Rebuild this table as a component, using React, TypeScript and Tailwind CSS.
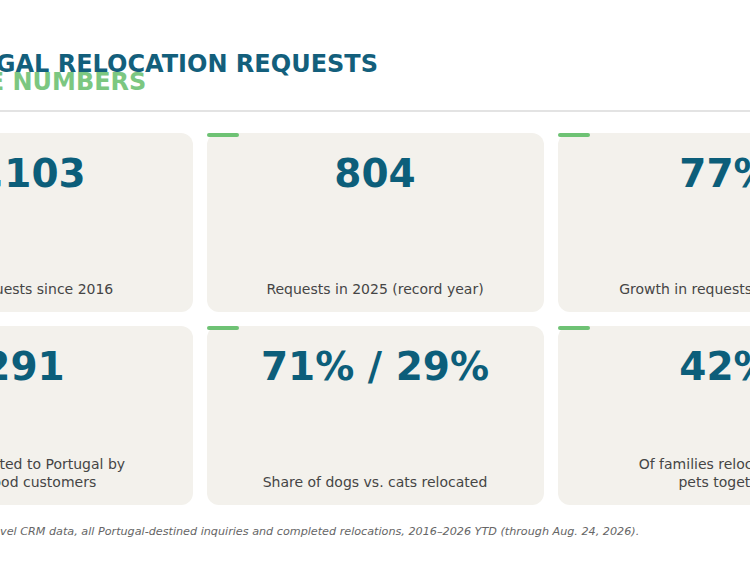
import React from "react";

type Stat = { value: string; label: React.ReactNode };

const stats: Stat[] = [
  { value: "4,103", label: "Total requests since 2016" },
  { value: "804", label: "Requests in 2025 (record year)" },
  { value: "77%", label: "Growth in requests since 2020" },
  {
    value: "291",
    label: (
      <>
        Pets relocated to Portugal by
        <br />
        Petswood customers
      </>
    ),
  },
  { value: "71% / 29%", label: "Share of dogs vs. cats relocated" },
  {
    value: "42%",
    label: (
      <>
        Of families relocating 2+
        <br />
        pets together
      </>
    ),
  },
];

function StatCard({ stat }: { stat: Stat }) {
  return (
    <div className="relative h-[179px] rounded-xl bg-[#f3f1ec] flex flex-col items-center pt-[21px] pb-[14px] px-6 text-center">
      <div className="absolute top-0 left-0 h-[4px] w-[32px] rounded-full bg-[#6ec274]" />
      <div className="text-[39px] leading-none font-bold text-[#0c5e7a]">{stat.value}</div>
      <div className="mt-auto text-[14px] leading-[17.5px] text-[#454545]">{stat.label}</div>
    </div>
  );
}

export default function App() {
  return (
    <div className="w-full h-[575px] overflow-hidden bg-white flex justify-center font-['DejaVu_Sans',sans-serif]">
      <div className="w-[1039px] shrink-0 flex flex-col">
        <div className="pt-[55px] pl-[49px]">
          <div className="text-[24px] leading-[18px] font-bold text-[#135f7c] whitespace-nowrap">
            PORTUGAL RELOCATION REQUESTS
          </div>
          <div className="pl-[4px] text-[24px] leading-[18px] font-bold text-[#7cc781] whitespace-nowrap">
            BY THE NUMBERS
          </div>
        </div>
        <div className="mt-[19px] h-[2px] bg-[#e3e3e3]" />
        <div className="mt-[21px] grid grid-cols-3 gap-[14px]">
          {stats.map((s, i) => (
            <StatCard key={i} stat={s} />
          ))}
        </div>
        <div className="mt-[19px] pl-[49px] text-[11.2px] leading-[16px] italic text-[#666666] whitespace-nowrap">
          Source: Paws Travel CRM data, all Portugal-destined inquiries and completed relocations, 2016–2026 YTD (through Aug. 24, 2026).
        </div>
      </div>
    </div>
  );
}
